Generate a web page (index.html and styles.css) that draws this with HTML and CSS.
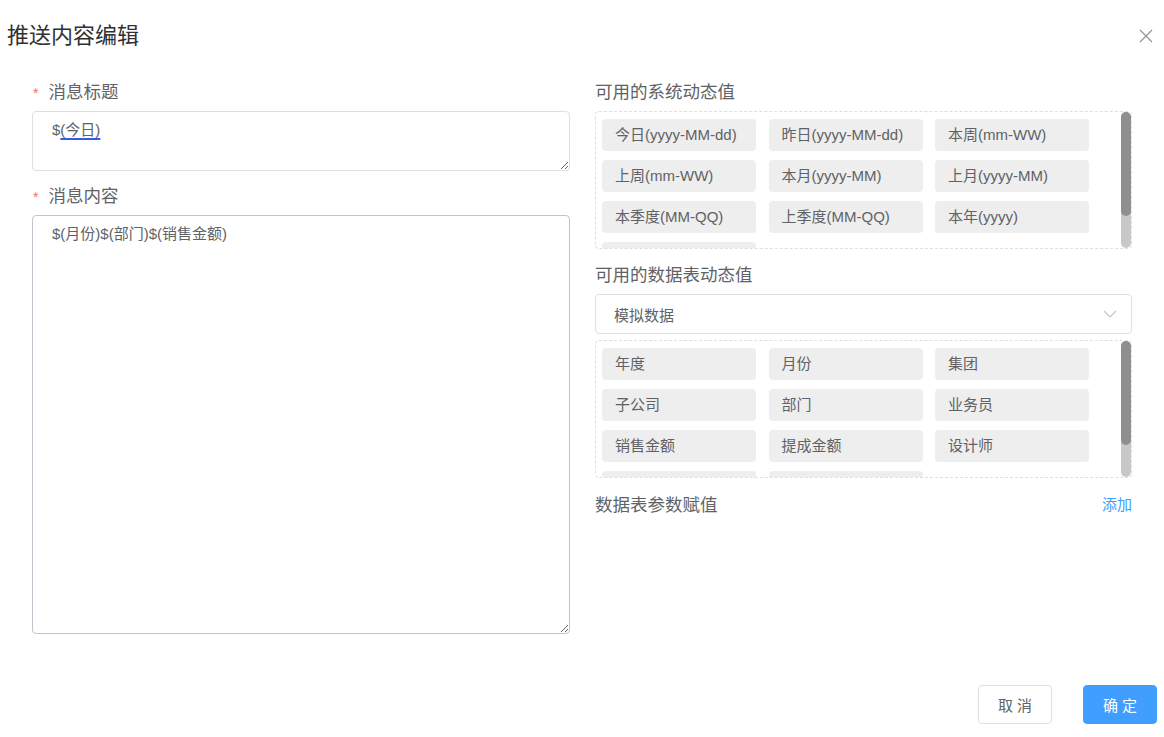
FILE: index.html
```html
<!DOCTYPE html>
<html lang="zh-CN">
<head>
  <meta charset="UTF-8">
  <meta name="viewport" content="width=device-width, initial-scale=1.0">
  <title>推送内容编辑</title>
  <link rel="stylesheet" href="styles.css">
</head>
<body>
  <div class="dialog">
    <div class="dialog-header">
      <span class="dialog-title">推送内容编辑</span>
      <button class="dialog-close" aria-label="关闭">
        <svg width="14" height="14" viewBox="0 0 14 14">
          <path d="M1 1 L13 13 M13 1 L1 13" stroke="#909399" stroke-width="1.2" fill="none"/>
        </svg>
      </button>
    </div>

    <div class="dialog-body">
      <div class="col">
        <div class="form-label"><span class="required">*</span>消息标题</div>
        <div class="text-input title-input">$<span class="composing">(今日)</span></div>

        <div class="form-label gap"><span class="required">*</span>消息内容</div>
        <div class="text-input content-input">$(月份)$(部门)$(销售金额)</div>
      </div>

      <div class="col">
        <div class="form-label">可用的系统动态值</div>
        <div class="tag-box">
          <div class="tag-grid">
            <span class="tag">今日(yyyy-MM-dd)</span>
            <span class="tag">昨日(yyyy-MM-dd)</span>
            <span class="tag">本周(mm-WW)</span>
            <span class="tag">上周(mm-WW)</span>
            <span class="tag">本月(yyyy-MM)</span>
            <span class="tag">上月(yyyy-MM)</span>
            <span class="tag">本季度(MM-QQ)</span>
            <span class="tag">上季度(MM-QQ)</span>
            <span class="tag">本年(yyyy)</span>
            <span class="tag"></span>
          </div>
          <div class="scrollbar"><div class="scrollbar-thumb"></div></div>
        </div>

        <div class="form-label gap-md">可用的数据表动态值</div>
        <div class="select">
          <span>模拟数据</span>
          <svg class="select-arrow" width="14" height="8" viewBox="0 0 14 8">
            <path d="M1 1 L7 7 L13 1" stroke="#c0c4cc" stroke-width="1.2" fill="none"/>
          </svg>
        </div>
        <div class="tag-box box-gap">
          <div class="tag-grid">
            <span class="tag">年度</span>
            <span class="tag">月份</span>
            <span class="tag">集团</span>
            <span class="tag">子公司</span>
            <span class="tag">部门</span>
            <span class="tag">业务员</span>
            <span class="tag">销售金额</span>
            <span class="tag">提成金额</span>
            <span class="tag">设计师</span>
            <span class="tag"></span>
            <span class="tag"></span>
          </div>
          <div class="scrollbar"><div class="scrollbar-thumb"></div></div>
        </div>

        <div class="form-label gap-lg row-between">
          <span>数据表参数赋值</span>
          <a class="link" href="#">添加</a>
        </div>
      </div>
    </div>

    <div class="dialog-footer">
      <button class="btn">取 消</button>
      <button class="btn btn-primary">确 定</button>
    </div>
  </div>
</body>
</html>
```

FILE: styles.css
```css
body {
  margin: 0;
  background: #fff;
  font-family: "Liberation Sans", "Noto Sans CJK SC", sans-serif;
  color: #606266;
}

.dialog {
  width: 1164px;
  height: 737px;
  background: #fff;
}

.dialog-header {
  display: flex;
  justify-content: space-between;
  align-items: center;
  padding: 20px 11px 19px 7px;
}

.dialog-title {
  font-size: 22px;
  line-height: 32px;
  color: #303133;
}

.dialog-close {
  border: none;
  background: none;
  padding: 0;
  width: 14px;
  height: 14px;
  display: flex;
  cursor: pointer;
}

.dialog-body {
  display: grid;
  grid-template-columns: 538px 537px;
  column-gap: 25px;
  padding: 0 32px;
}

.col {
  display: flex;
  flex-direction: column;
}

.form-label {
  height: 40px;
  line-height: 42px;
  font-size: 17.5px;
  color: #606266;
}

.form-label.gap {
  margin-top: 4px;
}

.form-label.gap-md {
  margin-top: 5px;
}

.form-label.gap-lg {
  margin-top: 6px;
}

.required {
  color: #f56c6c;
  font-size: 14px;
  margin: 0 10px 0 1px;
}

.row-between {
  display: flex;
  justify-content: space-between;
}

.link {
  color: #409eff;
  font-size: 15px;
  text-decoration: none;
}

.text-input {
  box-sizing: border-box;
  border: 1px solid #dcdfe6;
  border-radius: 4px;
  padding: 8px 19px;
  font-size: 15px;
  line-height: 20px;
  color: #606266;
  resize: vertical;
  overflow: auto;
}

.title-input {
  height: 60px;
}

.content-input {
  height: 419px;
  border-color: #c0c4cc;
}

.composing {
  text-decoration: underline;
  text-decoration-color: #2f5de8;
  text-decoration-thickness: 2px;
  text-underline-offset: 3px;
}

.tag-box {
  box-sizing: border-box;
  height: 138px;
  border: 1px dashed #dcdfe6;
  border-radius: 4px;
  display: flex;
  overflow: hidden;
}

.tag-box.box-gap {
  margin-top: 6px;
}

.tag-grid {
  flex: 1;
  display: grid;
  grid-template-columns: repeat(3, 154px);
  grid-auto-rows: 32px;
  column-gap: 12.5px;
  row-gap: 9px;
  padding: 7px 0 0 6px;
  overflow: hidden;
}

.tag {
  height: 32px;
  line-height: 32px;
  padding-left: 13px;
  background: #eeeeee;
  border-radius: 4px;
  font-size: 15px;
  color: #606266;
  white-space: nowrap;
}

.scrollbar {
  width: 10px;
  background: #c8c8c8;
  border-radius: 5px;
}

.scrollbar-thumb {
  height: 104px;
  background: #8f8f8f;
  border-radius: 5px;
}

.select {
  box-sizing: border-box;
  height: 40px;
  border: 1px solid #dcdfe6;
  border-radius: 4px;
  padding: 0 14px 0 18px;
  display: flex;
  justify-content: space-between;
  align-items: center;
  font-size: 15px;
  color: #606266;
}

.dialog-footer {
  display: flex;
  justify-content: flex-end;
  gap: 31px;
  padding: 51px 7px 0 0;
}

.btn {
  width: 74px;
  height: 39px;
  border: 1px solid #dcdfe6;
  border-radius: 4px;
  background: #fff;
  color: #606266;
  font-family: inherit;
  font-size: 15px;
  cursor: pointer;
}

.btn-primary {
  background: #409eff;
  border-color: #409eff;
  color: #fff;
}
```
